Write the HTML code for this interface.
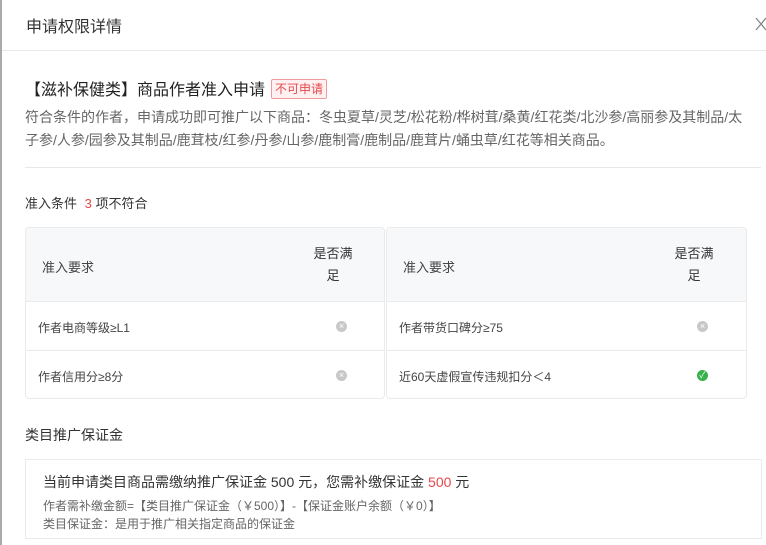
<!DOCTYPE html>
<html><head><meta charset="utf-8"><style>
*{margin:0;padding:0;box-sizing:border-box}
body{width:766px;height:545px;overflow:hidden;background:#fff;font-family:"Liberation Sans","Noto Sans CJK SC",sans-serif;color:#333;position:relative}
.lb{position:absolute;left:0;top:0;width:2px;height:545px;background:#aaa}
.abs{position:absolute;white-space:nowrap}
.hdr{left:26px;top:13px;font-size:16px;color:#333}
.hline{position:absolute;left:2px;right:0;top:50px;height:1px;background:#e8e8e8}
.title{left:25px;top:76px;font-size:16px;color:#222}
.tag{display:inline-block;font-size:12px;color:#e5484d;border:1px solid #f19a9c;background:#fff1f1;border-radius:2px;padding:0 3px;line-height:18px;margin-left:6px;vertical-align:2px}
.desc{position:absolute;left:25px;top:106px;width:737px;font-size:14px;line-height:23px;color:#666}
.div{position:absolute;left:25px;right:5px;top:167px;height:1px;background:#e8e8e8}
.sec{font-size:13px;color:#333}
.tb{position:absolute;top:227px;height:172px;border:1px solid #ebebeb;border-radius:4px;overflow:hidden}
.th{height:73px;background:#f7f8fa;position:relative}
.row{height:49px;border-top:1px solid #ebebeb;position:relative}
.c1{position:absolute;left:12px;font-size:12px;color:#444}
.ico{position:absolute;width:11px;height:11px;border-radius:50%;background:#c8c8c8;color:#fff;font-size:9px;line-height:11px;text-align:center}
.ok{background:#36b24a}
.box{position:absolute;left:25px;top:459px;width:737px;height:80px;border:1px solid #ebebeb}
.sm{position:absolute;left:287px;top:15px;font-size:13px;line-height:22px;text-align:center;width:40px;color:#333}
</style></head><body>
<div class="lb"></div>
<div class="abs hdr">申请权限详情</div>
<svg class="abs" style="left:755px;top:17px" width="12" height="14"><path d="M1 1L11 13M11 1L1 13" stroke="#888" stroke-width="1.3"/></svg>
<div class="hline"></div>
<div class="abs title">【滋补保健类】商品作者准入申请<span class="tag">不可申请</span></div>
<div class="desc">符合条件的作者，申请成功即可推广以下商品：冬虫夏草/灵芝/松花粉/桦树茸/桑黄/红花类/北沙参/高丽参及其制品/太<br>子参/人参/园参及其制品/鹿茸枝/红参/丹参/山参/鹿制膏/鹿制品/鹿茸片/蛹虫草/红花等相关商品。</div>
<div class="div"></div>
<div class="abs sec" style="left:25px;top:193px">准入条件 <span style="color:#e5484d;margin-left:4px">3</span> 项不符合</div>

<div class="tb" style="left:25px;width:360px">
 <div class="th"><span class="c1" style="left:16px;top:29px;font-size:13px">准入要求</span><span class="sm">是否满<br>足</span></div>
 <div class="row"><span class="c1" style="top:17px">作者电商等级≥L1</span><span class="ico" style="left:310px;top:19px">×</span></div>
 <div class="row"><span class="c1" style="top:17px">作者信用分≥8分</span><span class="ico" style="left:310px;top:19px">×</span></div>
</div>
<div class="tb" style="left:386px;width:361px">
 <div class="th"><span class="c1" style="left:16px;top:29px;font-size:13px">准入要求</span><span class="sm">是否满<br>足</span></div>
 <div class="row"><span class="c1" style="top:17px">作者带货口碑分≥75</span><span class="ico" style="left:310px;top:19px">×</span></div>
 <div class="row"><span class="c1" style="top:17px">近60天虚假宣传违规扣分＜4</span><span class="ico ok" style="left:310px;top:19px">✓</span></div>
</div>

<div class="abs sec" style="left:25px;top:425px;font-size:14px">类目推广保证金</div>
<div class="box">
 <div class="abs" style="left:17px;top:12px;font-size:14px;color:#333">当前申请类目商品需缴纳推广保证金 500 元，您需补缴保证金 <span style="color:#e5484d">500</span> 元</div>
 <div class="abs" style="left:17px;top:37px;font-size:12px;color:#666">作者需补缴金额=【类目推广保证金（￥500）】-【保证金账户余额（￥0）】</div>
 <div class="abs" style="left:17px;top:55px;font-size:12px;color:#666">类目保证金：是用于推广相关指定商品的保证金</div>
</div>
</body></html>
